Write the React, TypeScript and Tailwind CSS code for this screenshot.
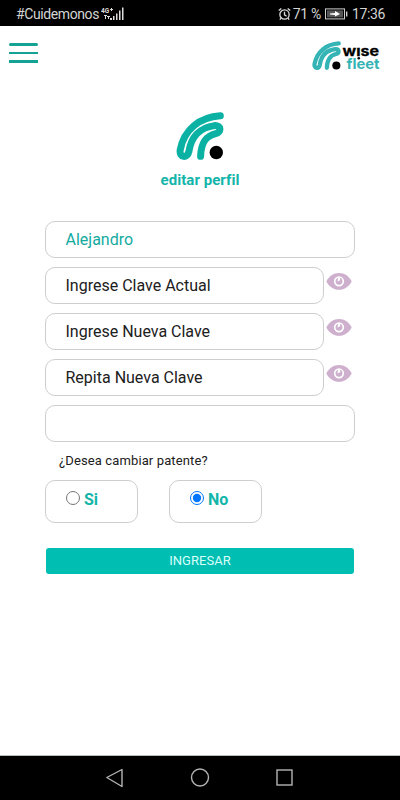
import { useState } from "react";

function WiseMark({ className, color }: { className: string; color: string }) {
  return (
    <svg viewBox="0 0 48 48" className={className} fill="none">
      <path
        d="M44.3 3.8C24 5 8 17.500 4.200 38C3 46 11.500 46.500 12.900 39.500C15 26 23 15.500 38.500 13.600C45.500 13.100 45.500 20.300 39.700 21.600C29.500 24 25 31 24.600 44.300"
        stroke={color}
        strokeWidth="7"
        strokeLinecap="round"
        strokeLinejoin="round"
      />
      <circle cx="40.3" cy="40.5" r="6.7" fill="#000" />
    </svg>
  );
}

function StatusBar() {
  return (
    <div className="flex h-[26px] items-center bg-black pt-0.5 pl-4 pr-[15px] text-[14px] leading-none text-[#d4d4d4]">
      <span className="w-[83px] tracking-[-0.4px]">#Cuidemonos</span>
      <svg viewBox="0 0 24 14" className="ml-0.5 h-[14px] w-6 shrink-0" fill="#dcdcdc">
        <text x="0" y="5.500" fontSize="6.500" fontWeight="700" fontFamily="Roboto, sans-serif">4G</text>
        <path d="M9 2h3v1H9zM10 1h1v3h-1zM3 8h3v1H3zM4 9h1v3H4zM6 9h3v1H6zM7 10h1v2H7zM9 11h2v2H9zM12 9h1.500v4H12zM15 6.500h1.500V13H15zM18 3.500h1.500V13H18zM21 .5h1.500V13H21z" />
      </svg>
      <svg viewBox="0 0 14 14" className="ml-auto h-[14px] w-[13px]" fill="none" stroke="#dcdcdc" strokeWidth="1.4">
        <circle cx="7" cy="7.5" r="5" />
        <path d="M7 4.5V8l2.3 1.4M.8 3.3 3.6 1M13.2 3.3 10.4 1M3.3 11.3 2 13M10.7 11.3 12 13" />
      </svg>
      <span className="ml-0.5 whitespace-nowrap tracking-[-0.3px]">71 %</span>
      <svg viewBox="0 0 23 12" className="ml-1 h-3 w-[23px]" fill="none">
        <rect x=".5" y=".9" width="19" height="10" stroke="#cfcfcf" />
        <rect x="2" y="2.4" width="16" height="7" fill="#555" />
        <path d="M5 5.4 10 5V3L15 6l-5 2.500V7L5 6.600Z" fill="#fff" />
        <path d="M21.7 3.5v5" stroke="#cfcfcf" strokeWidth="1.4" />
      </svg>
      <span className="ml-1 w-[33px] whitespace-nowrap tracking-[-0.35px]">17:36</span>
    </div>
  );
}

function Header() {
  return (
    <header className="flex h-[58px] items-start justify-between pl-[9px] pr-5">
      <button aria-label="Menu" className="mt-[17px] flex w-[29px] flex-col gap-1.5">
        <span className="h-[2.5px] rounded-sm bg-[#14a294]" />
        <span className="h-[2.5px] bg-[#14a294]" />
        <span className="h-[2.5px] bg-[#14a294]" />
      </button>
      <div className="mt-[15px] flex">
        <WiseMark className="h-[29px] w-[29px]" color="#34b4b4" />
        <svg viewBox="0 0 39 34" className="h-[34px] w-[39px]" fontFamily="Inter, sans-serif">
          <text x="1.5" y="14.5" fontSize="14.500" fontWeight="700" textLength="36.5" lengthAdjust="spacingAndGlyphs" fill="#000" stroke="#000" strokeWidth=".3">wıse</text>
          <circle cx="17.8" cy="17.300" r="1.300" fill="#000" />
          <text x="5.5" y="28" fontSize="14.500" fontWeight="700" textLength="33" lengthAdjust="spacingAndGlyphs" fill="#34b4b4">fleet</text>
        </svg>
      </div>
    </header>
  );
}

function EyeIcon() {
  return (
    <svg viewBox="0 0 26 18" className="mt-[5px] ml-0.5 h-[18px] w-[26px]">
      <path d="M.3 9.500C3 4.500 7.5 1.100 13 1.100S23 4.500 25.7 9.500C23 14.500 18.500 17.800 13 17.800S3 14.500 .3 9.500Z" fill="#ceb0ce" />
      <circle cx="13" cy="9.300" r="4.300" fill="none" stroke="#fff" strokeWidth="1.700" />
      <path d="M12 5.500h2.200v1.700q0 2-2.700 2.300Z" fill="#fff" />
    </svg>
  );
}

const inputClass =
  "block h-[37px] rounded-[10px] border border-[#cecece] bg-white pl-[19.5px] text-[16px] outline-none";

const passwordFields = ["Ingrese Clave Actual", "Ingrese Nueva Clave", "Repita Nueva Clave"];

export default function App() {
  const [change, setChange] = useState("No");

  return (
    <div className="flex h-[800px] w-[400px] flex-col overflow-hidden bg-white font-['Roboto',sans-serif]">
      <StatusBar />
      <Header />

      <main className="flex flex-1 flex-col">
        <div className="flex flex-col items-center">
          <WiseMark className="mt-7 h-12 w-12" color="#0bb2a3" />
          <h1 className="mt-2.5 text-[15px] leading-5 font-bold tracking-[0.05px] text-[#13b5aa]">editar perfil</h1>
        </div>

        <form className="mt-[31px] ml-[45px] flex w-[310px] flex-col" onSubmit={(e) => e.preventDefault()}>
          <div className="flex flex-col gap-[9px]">
            <input className={`${inputClass} w-full text-[#13aaa0]`} defaultValue="Alejandro" />
            {passwordFields.map((label) => (
              <div key={label} className="flex">
                <input
                  type="password"
                  placeholder={label}
                  className={`${inputClass} w-[279px] shrink-0 placeholder:text-[#202020]`}
                />
                <EyeIcon />
              </div>
            ))}
            <input className={`${inputClass} w-full`} />
          </div>

          <p className="mt-[9px] ml-3.5 text-[13px] leading-5 tracking-[0.12px] text-[#202020]">¿Desea cambiar patente?</p>

          <div className="mt-[9px] flex gap-[31px]">
            {["Si", "No"].map((option) => (
              <label
                key={option}
                className="flex h-[43px] w-[93px] rounded-[10px] border border-[#cecece] pl-5 text-[16px] font-bold text-[#13b5aa]"
              >
                <input
                  type="radio"
                  name="patente"
                  className="mt-2.5 h-3.5 w-3.5"
                  checked={change === option}
                  onChange={() => setChange(option)}
                />
                <span className="mt-[7px] ml-1 leading-6">{option}</span>
              </label>
            ))}
          </div>

          <button className="mt-[25px] mr-px ml-px h-[26px] rounded-[3px] bg-[#00beb2] text-[13px] tracking-[0.05px] text-[#d9fffa]">
            INGRESAR
          </button>
        </form>
      </main>

      <nav className="flex h-[45px] items-center justify-center border-t border-[#b5bfba] bg-black">
        <svg viewBox="0 0 190 20" className="h-5 w-[190px]" fill="none" stroke="#b4b4b4" strokeWidth="1.4">
          <path d="M1.800 9.500 17 1.500v17Z" strokeLinejoin="round" />
          <circle cx="95" cy="9.500" r="8.500" />
          <rect x="172" y="2" width="15" height="15" />
        </svg>
      </nav>
    </div>
  );
}
